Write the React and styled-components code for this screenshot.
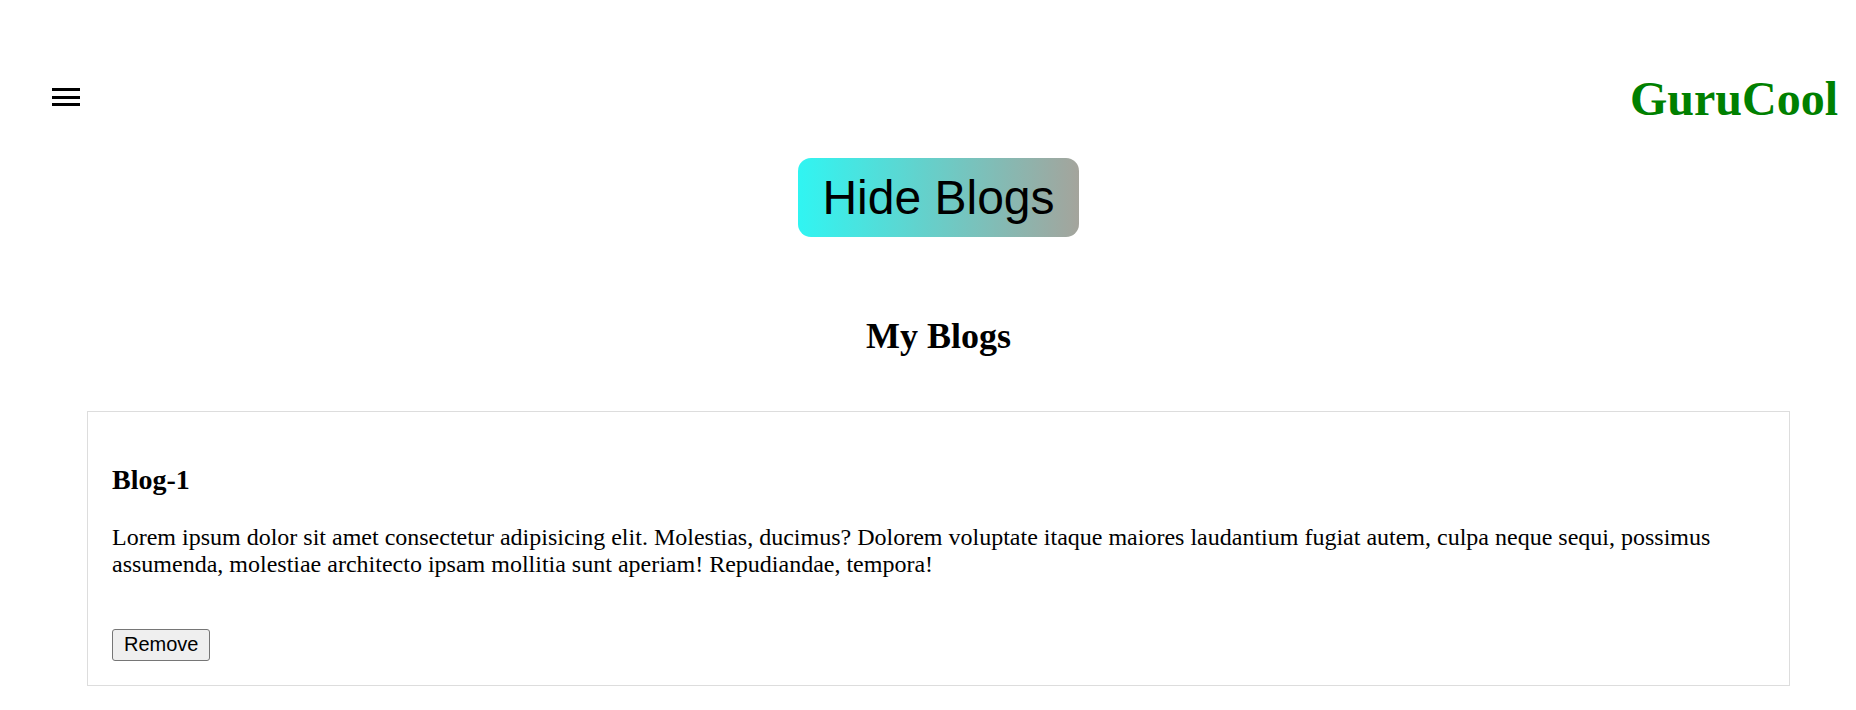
import React, { useState } from "react";
import styled, { createGlobalStyle } from "styled-components";

const GlobalStyle = createGlobalStyle`
  body {
    margin: 0;
    background: #ffffff;
    font-family: "Liberation Serif", "Times New Roman", serif;
    color: #000000;
  }
`;

const blogs = [
  {
    id: 1,
    title: "Blog-1",
    body:
      "Lorem ipsum dolor sit amet consectetur adipisicing elit. Molestias, ducimus? Dolorem voluptate itaque maiores laudantium fugiat autem, culpa neque sequi, possimus assumenda, molestiae architecto ipsam mollitia sunt aperiam! Repudiandae, tempora!",
  },
];

const App = () => {
  const [showBlogs, setShowBlogs] = useState(true);

  return (
    <>
      <GlobalStyle />
      <Header>
        <MenuButton aria-label="menu">
          <Bar />
          <Bar />
          <Bar />
        </MenuButton>
        <Logo>GuruCool</Logo>
      </Header>

      <Main>
        <ToggleButton onClick={() => setShowBlogs(!showBlogs)}>
          {showBlogs ? "Hide Blogs" : "Show Blogs"}
        </ToggleButton>

        {showBlogs && (
          <BlogSection>
            <SectionTitle>My Blogs</SectionTitle>
            {blogs.map((blog) => (
              <Card key={blog.id}>
                <CardTitle>{blog.title}</CardTitle>
                <CardText>{blog.body}</CardText>
                <RemoveButton>Remove</RemoveButton>
              </Card>
            ))}
          </BlogSection>
        )}
      </Main>
    </>
  );
};

const Header = styled.header`
  display: flex;
  justify-content: space-between;
  align-items: center;
  padding: 71px 18px 0 52px;
`;

const MenuButton = styled.button`
  display: flex;
  flex-direction: column;
  gap: 4.5px;
  width: 28px;
  margin-bottom: 3px;
  padding: 0;
  border: none;
  background: none;
  cursor: pointer;
`;

const Bar = styled.span`
  display: block;
  width: 28px;
  height: 3px;
  background: #000000;
`;

const Logo = styled.h1`
  margin: 0;
  font-size: 48px;
  font-weight: bold;
  color: #008000;
`;

const Main = styled.main`
  display: flex;
  flex-direction: column;
  align-items: center;
  padding-left: 21px;
`;

const ToggleButton = styled.button`
  margin-top: 32px;
  padding: 12px 24px;
  border: none;
  border-radius: 13px;
  background: linear-gradient(to right, #30f5f2, #a4a49c);
  font-family: "Liberation Sans", Arial, sans-serif;
  font-size: 48px;
  color: #000000;
  cursor: pointer;
`;

const BlogSection = styled.section`
  display: flex;
  flex-direction: column;
  align-items: stretch;
  width: 100%;
`;

const SectionTitle = styled.h2`
  margin: 78px 0 53.6px;
  text-align: center;
  font-size: 36px;
  font-weight: bold;
`;

const Card = styled.div`
  display: flex;
  flex-direction: column;
  align-items: flex-start;
  margin: 0 66px;
  padding: 24px;
  border: 1.5px solid #dddddd;
`;

const CardTitle = styled.h3`
  margin: 28px 0 28px;
  font-size: 28px;
  font-weight: bold;
`;

const CardText = styled.p`
  margin: 0;
  font-size: 24px;
`;

const RemoveButton = styled.button`
  margin-top: 51px;
  padding: 3.5px 11px;
  border: 1.5px solid #767676;
  border-radius: 3px;
  background: #efefef;
  font-family: "Liberation Sans", Arial, sans-serif;
  font-size: 20px;
  color: #000000;
  cursor: pointer;
`;

export default App;
